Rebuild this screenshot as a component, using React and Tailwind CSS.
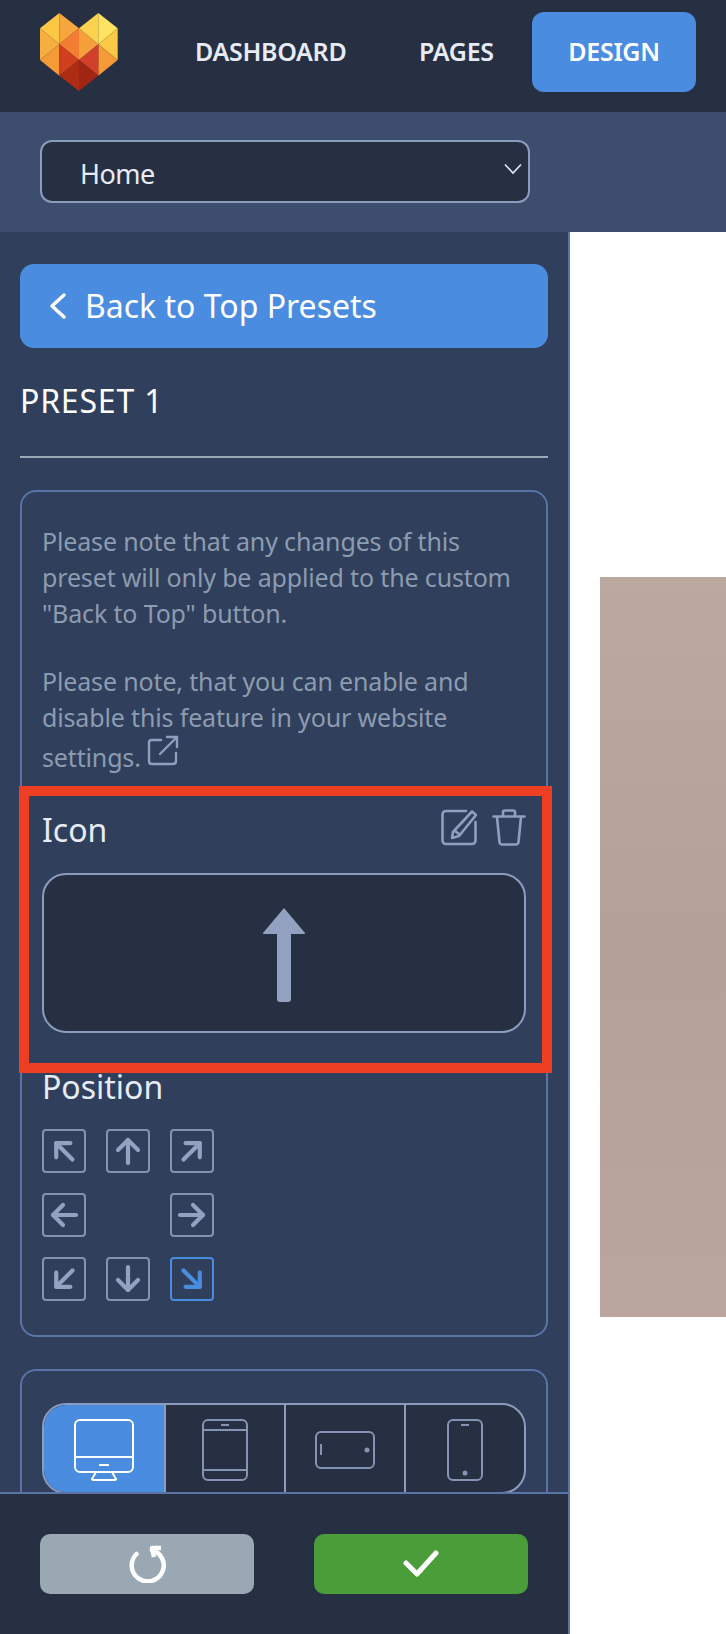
const font = { fontFamily: '"Noto Sans", sans-serif' };

function Logo() {
  const f = [
    ["30,70 88,24 88,118", "#fcc744"],
    ["88,24 147,70 88,118", "#f6a63c"],
    ["30,70 88,118 30,165", "#f7ae40"],
    ["30,165 88,118 88,212", "#f49a37"],
    ["88,118 147,70 147,165", "#f37e33"],
    ["147,70 205,118 147,165", "#f5a03a"],
    ["147,70 205,24 205,118", "#fdd24f"],
    ["205,24 263,70 205,118", "#fee363"],
    ["205,118 263,70 263,165", "#fbc945"],
    ["205,118 263,165 205,212", "#f49a37"],
    ["88,118 147,165 88,212", "#cf3f1e"],
    ["205,118 147,165 205,212", "#d2402c"],
    ["88,212 147,165 147,258", "#ad2c14"],
    ["147,165 205,212 147,258", "#a02512"],
  ];
  return (
    <svg width="78" height="78" viewBox="30 24 234 234" className="block">
      {f.map(([p, c]) => (
        <polygon key={p} points={p} fill={c} />
      ))}
    </svg>
  );
}

function PosArrow({ rot = 0, active = false, hidden = false }) {
  if (hidden) return <div className="w-[44px] h-[44px]" />;
  const c = active ? "#4a8cdf" : "#93a2c0";
  return (
    <div
      className={
        "w-[44px] h-[44px] rounded-[4px] border-2 flex items-center justify-center " +
        (active ? "border-[#4a8cdf]" : "border-[#8694b3]")
      }
    >
      <svg width="28" height="30" viewBox="0 0 28 30" fill="none" stroke={c} strokeWidth="4.2" strokeLinecap="round" strokeLinejoin="round" style={{ transform: `rotate(${rot}deg)` }}>
        <path d="M14 27V4" />
        <path d="M4 14L14 4L24 14" />
      </svg>
    </div>
  );
}

function Desktop() {
  return (
    <svg width="62" height="62" viewBox="0 0 62 62" fill="none" stroke="#fff" strokeWidth="2">
      <rect x="2" y="1" width="58" height="52" rx="5" />
      <path d="M2 38H60" />
      <path d="M26 46H36" />
      <path d="M23 53L19 60C19 61 20 61 21 61H41C42 61 43 61 43 60L39 53" />
    </svg>
  );
}
function Tablet() {
  return (
    <svg width="46" height="62" viewBox="0 0 46 62" fill="none" stroke="#8694b3" strokeWidth="2">
      <rect x="1" y="1" width="44" height="60" rx="5" />
      <path d="M1 11H45M1 51H45" />
      <path d="M19 6H27" />
    </svg>
  );
}
function Landscape() {
  return (
    <svg width="60" height="38" viewBox="0 0 60 38" fill="none" stroke="#8694b3" strokeWidth="2">
      <rect x="1" y="1" width="58" height="36" rx="5" />
      <path d="M6 13V24" />
      <circle cx="52" cy="19" r="1.5" fill="#8694b3" />
    </svg>
  );
}
function Phone() {
  return (
    <svg width="36" height="62" viewBox="0 0 36 62" fill="none" stroke="#8694b3" strokeWidth="2">
      <rect x="1" y="1" width="34" height="60" rx="5" />
      <path d="M14 6H22" />
      <circle cx="18" cy="54" r="1.5" fill="#8694b3" />
    </svg>
  );
}

export default function App() {
  return (
    <div className="relative w-[726px] h-[1634px] overflow-hidden flex flex-col bg-white" style={font}>
      <header className="h-[112px] shrink-0 bg-[#272f42] flex items-start pl-[40px]">
        <div className="mt-[13px] w-[78px]">
          <Logo />
        </div>
        <nav className="ml-[77px] mt-[12px] flex items-center h-[80px]">
          <span className="text-[25px] font-semibold text-[#e6ebf5] w-[224px] tracking-[-0.3px]">DASHBOARD</span>
          <span className="text-[25px] font-semibold text-[#e6ebf5] w-[113px] tracking-[-0.3px]">PAGES</span>
          <span className="h-[80px] w-[164px] rounded-[12px] bg-[#4a8cdf] flex items-center justify-center text-[25px] font-semibold text-white tracking-[-0.3px]">DESIGN</span>
        </nav>
      </header>
      <div className="h-[120px] shrink-0 bg-[#3c4d6d] pt-[28px] pl-[40px]">
        <div className="relative w-[490px] h-[63px] rounded-[12px] border-2 border-[#8c9cbd] bg-[#272f42] flex items-center pl-[38px] pt-[6px] text-[27px] text-[#e6ebf5] tracking-[-0.5px]">
          Home
          <svg className="absolute right-[6px] top-[21px]" width="18" height="12" viewBox="0 0 18 12" fill="none" stroke="#e6ebf5" strokeWidth="1.6">
            <path d="M1 1.5L9 10L17 1.5" />
          </svg>
        </div>
      </div>
      <div className="flex-1 flex min-h-0">
        <aside className="w-[570px] shrink-0 flex flex-col bg-[#303f5b] border-r-2 border-[#5a74a8]">
          <div className="flex-1 min-h-0 overflow-hidden px-[20px] pt-[32px]">
            <div className="h-[84px] rounded-[14px] bg-[#4a8cdf] flex items-center pl-[29px] text-white text-[32px]">
              <svg width="18" height="28" viewBox="0 0 18 28" fill="none" stroke="#fff" strokeWidth="3.5" strokeLinecap="round" strokeLinejoin="round">
                <path d="M15 3L3 14L15 25" />
              </svg>
              <span className="ml-[18px]">Back to Top Presets</span>
            </div>
            <div className="mt-[30px] text-[32px] leading-[46px] text-white tracking-[0.8px]">PRESET 1</div>
            <div className="mt-[32px] h-[2px] bg-[#9aa8b6]" />
            <section className="mt-[32px] rounded-[16px] border-2 border-[#5a74a8] px-[20px] pt-[31px] pb-[34px]">
              <p className="text-[25px] leading-[36px] text-[#8c9cb0] tracking-[-0.15px]">
                Please note that any changes of this
                <br />
                preset will only be applied to the custom
                <br />
                "Back to Top" button.
              </p>
              <p className="mt-[32px] text-[25px] leading-[36px] text-[#8c9cb0] tracking-[-0.15px]">
                Please note, that you can enable and disable this feature in your website settings.
                <svg className="inline-block ml-[6px] align-baseline" width="32" height="32" viewBox="0 0 32 32" fill="none" stroke="#8f9fbf" strokeWidth="2.4" strokeLinecap="round" strokeLinejoin="round">
                  <path d="M14 5H5C3 5 2 6 2 8V26C2 28 3 29 5 29H26C28 29 29 28 29 26V18" />
                  <path d="M13 19L30 2M20 2H30V12" />
                </svg>
              </p>
              <div className="mt-[31px] flex items-start justify-between">
                <span className="text-[32px] leading-[48px] text-[#e6ebf5]">Icon</span>
                <div className="mt-[3px] flex gap-[14px]">
                  <svg width="37" height="37" viewBox="0 0 37 37" fill="none" stroke="#8f9fbf" strokeWidth="2.6" strokeLinecap="round" strokeLinejoin="round">
                    <path d="M25 2H5C3 2 1.5 3.5 1.5 5.5V31.5C1.5 33.5 3 35 5 35H31C33 35 34.5 33.5 34.5 31.5V13" />
                    <path d="M31 2.5L35 6L18 27L11 29L12 23Z" />
                    <path d="M14 22L18 25" />
                  </svg>
                  <svg width="34" height="37" viewBox="0 0 34 37" fill="none" stroke="#8f9fbf" strokeWidth="2.6" strokeLinecap="round" strokeLinejoin="round">
                    <path d="M1.5 7.5H32.5" />
                    <path d="M11 7V3C11 2 12 1.5 13 1.5H21C22 1.5 23 2 23 3V7" />
                    <path d="M5 8L7.5 33C7.5 34.5 9 35.5 10 35.5H24C25 35.5 26.5 34.5 26.5 33L29 8" />
                  </svg>
                </div>
              </div>
              <div className="mt-[19px] h-[160px] rounded-[24px] border-2 border-[#8c9cbd] bg-[#272f42] flex items-center justify-center pt-[4px]">
                <svg width="42" height="94" viewBox="0 0 42 94" fill="#93a2c0">
                  <path d="M21 0L42 25C42 26 41.500 26 41 26H28V91C28 93 27 94 25 94H17C15 94 14 93 14 91V26H1C0.500 26 0 26 0 25Z" />
                </svg>
              </div>
              <div className="mt-[30px] text-[32px] leading-[48px] text-[#e6ebf5]">Position</div>
              <div className="mt-[18px] grid grid-cols-[44px_44px_44px] gap-x-[20px] gap-y-[20px]">
                <PosArrow rot={-45} />
                <PosArrow rot={0} />
                <PosArrow rot={45} />
                <PosArrow rot={-90} />
                <PosArrow hidden />
                <PosArrow rot={90} />
                <PosArrow rot={-135} />
                <PosArrow rot={180} />
                <PosArrow rot={135} active />
              </div>
            </section>
            <section className="mt-[32px] h-[200px] rounded-t-[16px] border-2 border-b-0 border-[#5a74a8] px-[20px] pt-[32px]">
              <div className="h-[91px] rounded-[24px] border-2 border-[#8c9cbd] bg-[#272f42] overflow-hidden grid grid-cols-4">
                <div className="bg-[#4a8cdf] flex items-start justify-center pt-[14px]"><Desktop /></div>
                <div className="border-l-2 border-[#8c9cbd] flex items-start justify-center pt-[14px]"><Tablet /></div>
                <div className="border-l-2 border-[#8c9cbd] flex items-start justify-center pt-[26px]"><Landscape /></div>
                <div className="border-l-2 border-[#8c9cbd] flex items-start justify-center pt-[14px]"><Phone /></div>
              </div>
            </section>
          </div>
          <footer className="h-[142px] shrink-0 border-t-2 border-[#5a74a8] bg-[#272f42] flex gap-[60px] pl-[40px] pt-[40px]">
            <div className="w-[214px] h-[60px] rounded-[10px] bg-[#9aa8b4] flex items-center justify-center">
              <svg width="38" height="38" viewBox="0 0 38 38" fill="none" stroke="#fff" strokeWidth="4.5" strokeLinecap="round" strokeLinejoin="round">
                <path d="M8.500 9A16 16 0 1 0 24 5" />
                <path d="M33 3H24L26 12" strokeLinecap="butt" />
              </svg>
            </div>
            <div className="w-[214px] h-[60px] rounded-[10px] bg-[#4a9d38] flex items-center justify-center">
              <svg width="36" height="28" viewBox="0 0 36 28" fill="none" stroke="#fff" strokeWidth="5" strokeLinecap="round" strokeLinejoin="round">
                <path d="M3 13L14 24L33 3" />
              </svg>
            </div>
          </footer>
        </aside>
        <main className="flex-1 bg-white pl-[30px] pt-[345px]">
          <div className="w-full h-[740px] bg-gradient-to-b from-[#bba89f] via-[#b3a096] to-[#baa69f]" />
        </main>
      </div>
      <div className="absolute left-[19px] top-[786px] w-[533px] h-[287px] border-[10px] border-[#ee3e24] pointer-events-none" />
    </div>
  );
}
